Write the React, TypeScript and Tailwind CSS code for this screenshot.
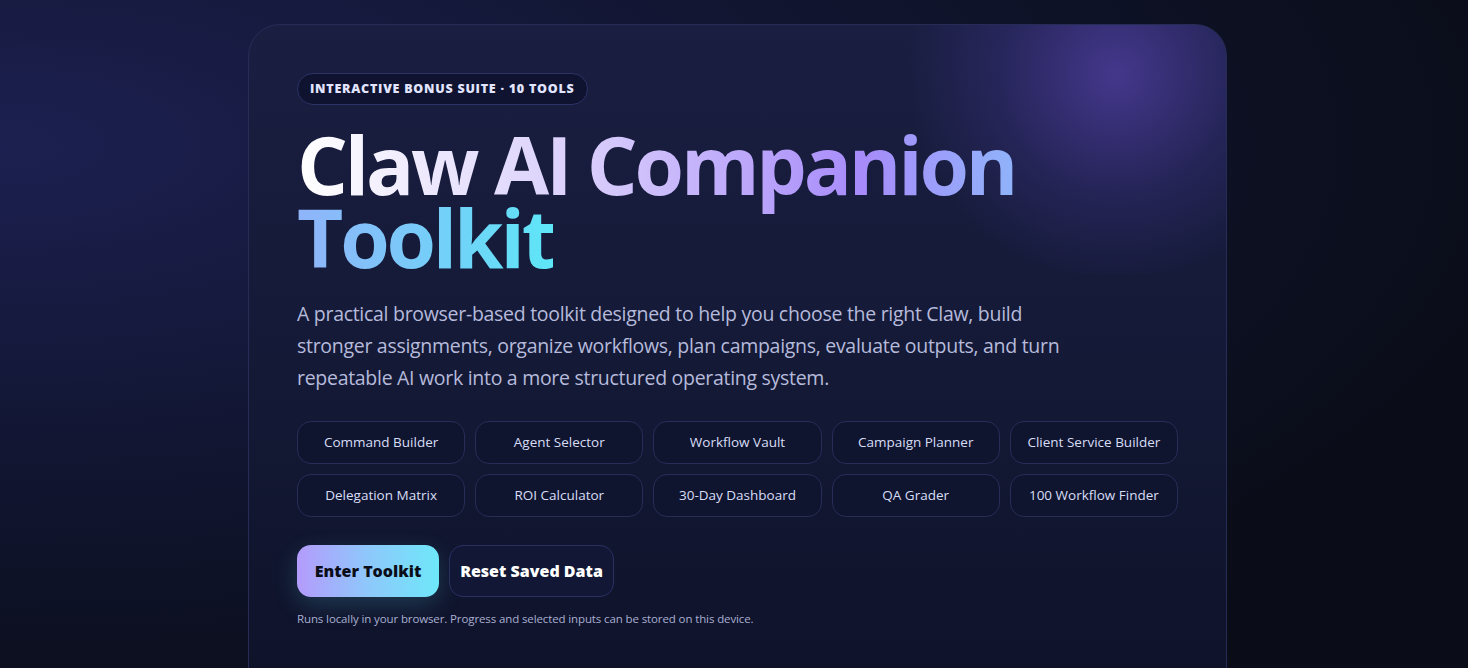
const tools = [
  'Command Builder',
  'Agent Selector',
  'Workflow Vault',
  'Campaign Planner',
  'Client Service Builder',
  'Delegation Matrix',
  'ROI Calculator',
  '30-Day Dashboard',
  'QA Grader',
  '100 Workflow Finder',
];

export default function App() {
  return (
    <div
      className="min-h-screen w-full overflow-hidden bg-[#0a0d18] bg-[radial-gradient(ellipse_at_0%_20%,#1c2050_0%,#111530_40%,#0a0d18_75%)] pt-6 pl-[7px] flex justify-center"
      style={{ fontFamily: '"Open Sans", "Noto Sans", sans-serif' }}
    >
      <main className="relative w-[979px] h-[700px] rounded-[32px] border border-[#262c55] bg-[linear-gradient(180deg,#1a1f42_0%,#141936_50%,#0e1228_100%)] overflow-hidden px-12 pt-12">
        {/* glow top right */}
        <div className="pointer-events-none absolute -top-[150px] right-[-110px] w-[440px] h-[400px] rounded-full bg-[radial-gradient(circle,rgba(96,72,190,0.6)_0%,rgba(72,56,155,0.28)_40%,rgba(30,30,80,0)_70%)]" />

        <div className="relative">
          <span className="inline-flex items-center h-8 px-3 rounded-full border border-[#2c3366] bg-[#0f1330] text-[12.5px] font-extrabold uppercase tracking-[0.06em] text-[#e2e5ff]">
            Interactive Bonus Suite · 10 Tools
          </span>

          <h1 className="mt-[23px] text-[80px] font-bold leading-[0.91] tracking-[-0.04em]">
            <span className="bg-[linear-gradient(90deg,#ffffff_0%,#d8cdfb_30%,#a78bfa_58%,#8fb4fa_74%,#5ee6f7_100%)] bg-clip-text text-transparent">
              Claw AI Companion Toolkit
            </span>
          </h1>

          <p className="mt-[24px] max-w-[770px] text-[19.5px] leading-8 tracking-[-0.015em] text-[#b6bbdc]">
            A practical browser-based toolkit designed to help you choose the right Claw, build stronger assignments, organize workflows, plan campaigns, evaluate outputs, and turn repeatable AI work into a more structured operating system.
          </p>

          <div className="mt-[27px] grid grid-cols-5 gap-[10px]">
            {tools.map((t) => (
              <button
                key={t}
                className="h-[43px] rounded-[14px] border border-[#262d58] bg-[#10152f] text-[13.5px] text-[#d8ddf6]"
              >
                {t}
              </button>
            ))}
          </div>

          <div className="mt-7 flex items-center gap-[10px]">
            <button className="h-[52px] w-[142px] rounded-[14px] bg-[linear-gradient(90deg,#b49bfc_0%,#8ec8fb_50%,#6ee7f9_100%)] text-[16px] font-extrabold text-[#0a0d18] shadow-[0_8px_24px_rgba(94,230,247,0.18)]">
              Enter Toolkit
            </button>
            <button className="h-[52px] w-[165px] rounded-[14px] border border-[#2a3162] bg-[#121735] text-[16px] font-extrabold text-white">
              Reset Saved Data
            </button>
          </div>

          <p className="mt-[13px] text-[11.5px] tracking-[-0.01em] text-[#a9afd2]">
            Runs locally in your browser. Progress and selected inputs can be stored on this device.
          </p>
        </div>
      </main>
    </div>
  );
}
